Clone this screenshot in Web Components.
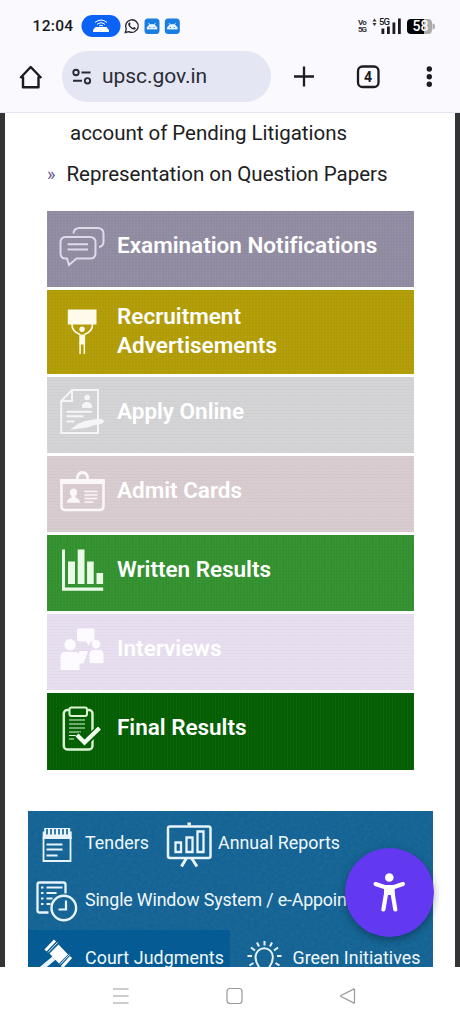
<!DOCTYPE html>
<html lang="en">
<head>
<meta charset="utf-8">
<title>UPSC</title>
<style>
html,body{margin:0;height:100%;overflow:hidden;background:#fff}
body{font-family:Roboto,"Liberation Sans",sans-serif;color:#202124}
</style>
</head>
<body>
<phone-screen>
  <status-bar></status-bar>
  <browser-bar></browser-bar>
  <site-page>
    <notice-item w="277" indent="65" top="8">account of Pending Litigations</notice-item>
    <notice-item w="321" indent="42" top="17" marked>Representation on Question Papers</notice-item>
    <menu-list>
      <menu-tile icon="chat" y="211" h="76" color="#928ca3" ink="#dedaea" w="260">Examination Notifications</menu-tile>
      <menu-tile icon="recruit" y="290" h="84" color="#b39d07" ink="#fffbea" w="124" line2="Advertisements" w2="160">Recruitment</menu-tile>
      <menu-tile icon="apply" y="377" h="76" color="#d4d4d7" ink="#f5f5f7" w="127">Apply Online</menu-tile>
      <menu-tile icon="card" y="456" h="76" color="#d9ccd0" ink="#fbf6f8" w="125">Admit Cards</menu-tile>
      <menu-tile icon="chart" y="535" h="76" color="#33922f" ink="#e9fbe6" w="154">Written Results</menu-tile>
      <menu-tile icon="talk" y="614" h="76" color="#e7dff0" ink="#fdfbff" w="104.5">Interviews</menu-tile>
      <menu-tile icon="final" y="693" h="77" color="#045f03" ink="#d9f5d3" w="129.5">Final Results</menu-tile>
    </menu-list>
    <quick-links></quick-links>
  </site-page>
  <nav-bar></nav-bar>
</phone-screen>
<script>
const define=(name,html,setup)=>customElements.define(name,class extends HTMLElement{
  constructor(){super();this.attachShadow({mode:'open'})}
  connectedCallback(){
    this.shadowRoot.innerHTML=typeof html==='function'?html(this):html;
    if(setup)setup(this);
  }
});

/* A single line of text spaced to an exact measure (attribute w, in px). */
define('fit-text','<style>:host{display:inline-block;white-space:nowrap;flex:none}span{display:inline-block}</style><span><slot></slot></span>',el=>{
  const w=+el.getAttribute('w'),s=el.shadowRoot.querySelector('span');
  el.style.width=w+'px';
  const n=el.textContent.length;
  s.style.letterSpacing=((w-s.getBoundingClientRect().width)/n)+'px';
});

define('phone-screen',`<style>:host{display:flex;flex-direction:column;width:460px;height:1024px;overflow:hidden;background:#fff}</style><slot></slot>`);

define('status-bar',`<style>
:host{display:flex;height:51px;flex:none;background:#f9f9fe;color:#17181c;align-items:flex-start}
svg{display:block;flex:none}
.t{font:500 15.500px/20px Roboto,sans-serif;margin:16px 0 0 32.5px}
.vo{font:700 8px/7px "Roboto",sans-serif;margin:19px 0 0 178px;width:10px;color:#333}
.vo fit-text,.vo{display:block}
.g{font:500 9.5px/10px Roboto,sans-serif;margin:17px 0 0 2px;width:11px}
.sig{margin-left:-10px}
.b{box-sizing:border-box;padding-left:5.500px;margin:19px 0 0 4px;height:15px;border-radius:4px;background:linear-gradient(90deg,#050505 17px,#acacac 17px);color:#fff;font:500 14px/15.5px Roboto,sans-serif;flex:none}
</style>
<fit-text class="t" w="41">12:04</fit-text>
<svg width="106.500" height="51" viewBox="73.500 0 106.500 51">
<rect x="81" y="15" width="39" height="22" rx="11" fill="#0b63f6"/>
<g fill="none" stroke="#fff" stroke-width="1"><path d="M94.500 22.500Q100.500 17.500 106.500 22.500M96.500 24.500Q100.500 21 104.500 24.500M98.500 26Q100.500 24.500 102.500 26"/></g>
<path d="M95 27h11l2.500 3v2h-16v-2z" fill="#fff"/>
<path d="M124.800 32.500l1-3.600a6.300 6.300 0 1 1 2.600 2.700z" fill="none" stroke="#24262a" stroke-width="1.300"/>
<path d="M128.200 23c.8-1 1.500-.4 1.900.9l-.7 1.200c.8 1.500 1.700 2.200 3 2.800l1.100-1 1.800 1c.1 1.500-1.400 1.900-2.700 1.600-2.600-.8-4.500-3-4.900-4.900-.1-.6.100-1.200.5-1.600z" fill="#24262a"/>
<g id="a"><rect x="144" y="18.500" width="15" height="15.500" rx="3.500" fill="#1a7de0"/><path d="M146.500 29a5 4.500 0 0 1 10 0z M148.200 23l1.400 2.500M154.800 23l-1.400 2.500" fill="#e8f4ff" stroke="#e8f4ff" stroke-width=".8"/><path d="M149 27.500h1M153 27.500h1" stroke="#1a7de0"/></g>
<use href="#a" x="20.300"/>
</svg>
<div class="vo"><fit-text w="8">Vo</fit-text><fit-text w="8">5G</fit-text></div>
<svg width="9" height="51" viewBox="368 0 9 51"><path d="M372.500 21.500l2-3 2 3zM372.500 23l2 3 2-3z" fill="#333"/></svg>
<fit-text class="g" w="10">5G</fit-text>
<svg class="sig" width="24" height="51" viewBox="379 0 24 51"><path d="M381.500 28.500h2.800v5.500h-2.800zM387 26.500h2.800v7.500h-2.800zM392.500 22.500h2.800v11.500h-2.800zM398 18.500h2.800v15.500h-2.800z" fill="#1b1c20"/></svg>
<fit-text class="b" w="16">58</fit-text>
<svg width="5" height="51" viewBox="432 0 5 51"><path d="M432.500 23.500q2.500 0 2.500 3t-2.500 3z" fill="#acacac"/></svg>
`,el=>{
  el.shadowRoot.querySelector('.b').style.width='25px';
});

define('browser-bar',`<style>
:host{display:flex;height:61px;flex:none;background:#f9f9fe;border-bottom:1px solid #e6e6f0;color:#26272e}
svg{display:block;flex:none}
.u{display:flex;width:209px;height:51px;border-radius:26px;background:#e5e6f3}
.u fit-text{font-size:21px;line-height:51px;color:#2b2c36}
</style>
<svg width="62" height="61" viewBox="0 51 62 61"><path d="M23 76.500v10.800h15.500v-10.800M20.300 78L30.700 67 41.300 78" fill="none" stroke="#1b1c22" stroke-width="2.400" stroke-linejoin="round"/></svg>
<div class="u"><svg width="40" height="51" viewBox="62 51 40 51"><g fill="none" stroke="#2a2b36" stroke-width="1.900"><circle cx="76" cy="72.500" r="2.700"/><path d="M81.500 72.500h9M73 80.800h9"/><circle cx="87.500" cy="80.800" r="2.700"/></g></svg><fit-text w="105">upsc.gov.in</fit-text></div>
<svg width="189" height="61" viewBox="271 51 189 61"><g fill="none" stroke="#1b1c22" stroke-width="2.300"><path d="M294 76.500h20M304 66.500v20"/><rect x="358" y="66.500" width="20.500" height="20.500" rx="4.500"/></g><text x="368" y="81.700" text-anchor="middle" font-family="Roboto,sans-serif" font-weight="700" font-size="14" fill="#1b1c22">4</text><g fill="#1b1c22"><circle cx="429.300" cy="69" r="2.700"/><circle cx="429.300" cy="76.700" r="2.700"/><circle cx="429.300" cy="84.300" r="2.700"/></g></svg>
`);

define('site-page',`<style>:host{display:flex;flex-direction:column;height:854px;flex:none;box-sizing:border-box;border:solid #333435;border-width:0 5px;background:#fff;overflow:hidden}</style><slot></slot>`);

define('notice-item',el=>`<style>
:host{display:flex;flex:none;height:24px;line-height:24px;font-size:20.500px;color:#202022;margin-top:${el.getAttribute('top')}px;padding-left:${el.getAttribute('indent')}px}
i{font-style:normal;color:#64558f;font-size:18px;width:19.500px;line-height:24px}</style>
${el.hasAttribute('marked')?'<i>»</i>':''}<fit-text w="${el.getAttribute('w')}">${el.textContent}</fit-text>`);

define('menu-list',`<style>:host{display:flex;flex-direction:column;gap:3px;margin:25px 0 0 41.500px;width:367px;flex:none}</style><slot></slot>`);

const icons={
chat:'<path d="M65 237h24.500q5.500 0 5.500 5.500v10.500q0 5.500-5.500 5.500h-13.500l-7.500 6.500-2-6.500h-1.500q-5 0-5-5.500v-10.500q0-5.500 5-5.500zM73 233.500q.5-5.500 6-5.500h18q6 0 6 6v7.500q0 5-4.500 5.500M67 244.300h20.500M67 249.500h20.500"/>',
recruit:'<g fill="currentColor" stroke="none"><path d="M67.300 309.500h28.700v15h-28.700zM78.800 334.500h5.800v10h-5.800z"/><circle cx="81.600" cy="329.300" r="2.700"/></g><path d="M71.500 324q-.5 7 8 10.500M92 324q.5 7-8 10.500" stroke-width="1.600"/><path d="M79.600 343v11M83.800 343v11" stroke-width="1.500"/>',
apply:'<path d="M71.500 390H97.500V433H60.700V401zV401H60.700"/><g fill="currentColor" stroke="none"><circle cx="86.600" cy="397.500" r="2.800"/><path d="M81.500 408v-3.500l3-2.500h4l3 2.500v3.500zM69.500 429.500l8.500-6q11-5 23-4.500l3 2-2 2.500q-10 2-17 4.500z"/></g><path d="M66 411.700h25.500M66 416.300h17M66 421.500h8"/>',
card:'<path d="M61 480V506q0 4 4 4h34q4 0 4-4V480" stroke-width="2.600"/><path d="M59.500 481.600h44.800" stroke-width="5"/><path d="M76.700 480q0-7.500 5.300-7.500t5.300 7.500" stroke-width="2.800"/><g fill="currentColor" stroke="none"><ellipse cx="73" cy="492.500" rx="3.600" ry="4"/><path d="M66.500 502.700q0-4 4.500-5v-2h4v2q4.500 1 4.500 5z"/></g><path d="M84 491.500h13M84 495h13M84 498.500h13M84 502h9" stroke-width="1.700"/>',
chart:'<g fill="currentColor" stroke="none"><path d="M61.500 549.500h3v38h38.200v3.300h-41.200zM67.500 561.500h7v22.500h-7zM77.200 549.500h6.800v34.500h-6.800zM86.600 561.500h6.600v22.500h-6.600zM96 573h6.600v11h-6.600z"/></g>',
talk:'<g fill="currentColor" stroke="none"><path d="M79 628.500h12.500q2.500 0 2.500 2.500v8q0 2.500-2.500 2.500h-1l-2.500 4-2.500-4h-6.500q-2.500 0-2.500-2.500v-8q0-2.500 2.500-2.500z"/><circle cx="69.600" cy="644.700" r="5.700"/><circle cx="95.600" cy="644.300" r="4.200"/><path d="M60 670v-13q0-5 4.500-5h9.500q5 0 5 5v13zM89 663v-8q0-5 4-5h6q4 0 4 5v8zM78.500 651h9l-4.500 12.500h-4z"/></g>',
final:'<rect x="63.300" y="710" width="28.700" height="39.500" rx="3.500" stroke-width="2.400"/><rect x="69" y="707.500" width="17.500" height="8.500" rx="2" fill="#045f03"/><path d="M68.500 720h16M68.500 724h16M68.500 728h16M68.500 732h12M68.500 735.500h7M68.500 739h5" stroke-width="1.200"/><path d="M76.500 734.500l7.700 8.200 15.500-15" stroke="#045f03" stroke-width="7.500"/><path d="M76.500 735l7.500 7.500 15-14.500" stroke-width="4.200" stroke="#f2fff0"/>'
};
define('menu-tile',el=>{
  const a=n=>el.getAttribute(n),h=a('h');
  return `<style>
:host{display:flex;flex:none;height:${h}px;color:#fff;background:repeating-linear-gradient(90deg,#ffffff08 0 1px,#0000 1px 3px),repeating-linear-gradient(#00000006 0 1px,#0000 1px 3px),${a('color')}}
svg{display:block;flex:none;color:${a('ink')}}
.x{display:flex;flex-direction:column;padding-top:${a('line2')?12:20}px;font-size:22.500px;font-weight:600;line-height:29px}
</style><svg width="70.500" height="${h}" viewBox="46.500 ${a('y')} 70.500 ${h}" fill="none" stroke="currentColor" stroke-width="2">${icons[a('icon')]}</svg>
<div class="x"><fit-text w="${a('w')}">${el.textContent}</fit-text>${a('line2')?`<fit-text w="${a('w2')}">${a('line2')}</fit-text>`:''}</div>`;
});

const links={
tender:'<path d="M43 836v24h27v-24" stroke-width="1.800"/><path d="M42.200 830.500h1.500v-3.500h26v3.500h1.500v7.500h-29z" fill="#e8f4fb" stroke="none"/><path d="M46.500 828v5.500M50.500 828v5.500M54.500 828v5.500M58.500 828v5.500M62.500 828v5.500M66.500 828v5.500" stroke="#196594" stroke-width="1.700"/><path d="M46 843.500h16M46 848.500h16M46 854.500h11" stroke-width="1.800"/>',
board:'<rect x="168" y="825.500" width="42.500" height="31.500" rx="2" stroke-width="2.500"/><path d="M189.200 821.500v3" stroke-width="3.500"/><path d="M186.500 857l-5 8.500M191.500 857l5.500 8.500" stroke-width="3"/><path d="M175.500 841.500h5.500v9.500h-5.500zM186.500 836.500h6v14.500h-6zM197.500 830.500h6v20.500h-6z" stroke-width="2.300"/>',
window:'<path d="M48 912h-9q-2 0-2-2v-26q0-2 2-2h24q2 0 2 2v9" stroke-width="2.300"/><path d="M46 887h16M46 892.500h10M46 898h6M46 903.500h4" stroke-width="1.800"/><path d="M40.500 887h2.500M40.500 892.500h2.500M40.500 898h2.500M40.500 903.500h2.500" stroke-width="2"/><circle cx="63.300" cy="907.500" r="12.300" stroke-width="2.400"/><path d="M65.500 900v9h-7.500" stroke-width="2.200"/>',
gavel:'<path d="M56 955L38 970" stroke-width="4.500"/><path d="M58 943.500l9.500 10-9 9-9.500-10z" fill="#fff" stroke="none"/><path d="M54.500 939.500l-9.500 10M70.500 956l-9 10" stroke-width="3" stroke="#fff"/><path d="M57 941.500l-9.500 10M69 953.500l-9.500 10" stroke-width="1"/>',
bulb:'<path d="M258.500 970v-4q-3.500-5-3.500-10a8.700 8.700 0 0 1 17.400 0q0 5-3.500 10v4M264 940v4.500M256.500 941.500l2 4M271.500 941.500l-2 4M250.500 946.500l4 3M277.500 946.500l-4 3M247 955h4.500M281 955h-4.500M249 964.500l4-2.500M279 964.500l-4-2.500"/>'
};
define('link-item',el=>{
  const a=n=>el.getAttribute(n);
  return `<style>:host{display:flex;flex:none;height:57.500px;color:#f1f8fc;font-size:17.800px;line-height:${a('lh')||56.5}px}svg{display:block;flex:none}:host([active]){background:#055c95;padding-right:5.500px}</style>
<svg width="${a('iw')}" height="57.500" viewBox="${a('x')} ${a('y')} ${a('iw')} 57.500" fill="none" stroke="#e8f4fb" stroke-width="2">${links[a('icon')]}</svg><fit-text w="${a('w')}">${el.textContent}</fit-text>`;
});

define('quick-links',`<style>
:host{display:grid;grid-template-columns:1fr;margin:41px 0 0 22.500px;width:405px;height:156px;flex:none;position:relative;background:#0f6194}
.n{position:absolute;inset:0;opacity:.09}
.r{display:flex;height:57.500px;position:relative}
.w{padding-top:3.500px;height:152.500px;overflow:hidden;position:relative;width:405px}
a11y-button{position:absolute;left:317.500px;top:37px}
</style>
<svg class="n" width="405" height="156"><filter id="n"><feTurbulence type="fractalNoise" baseFrequency=".3" numOctaves="2"/><feColorMatrix type="saturate" values="0"/></filter><rect width="405" height="156" filter="url(#n)"/></svg>
<div class="w">
<div class="r"><link-item icon="tender" x="27.500" y="814" iw="57.500" w="64">Tenders</link-item><link-item icon="board" x="149" y="814" iw="69" w="122">Annual Reports</link-item></div>
<div class="r"><link-item icon="window" x="27.500" y="871.500" iw="57.500" w="307.500">Single Window System / e-Appointment</link-item></div>
<div class="r"><link-item active icon="gavel" x="27.500" y="929" iw="57.500" w="139" lh="55">Court Judgments</link-item><link-item icon="bulb" x="229.500" y="929" iw="63" w="128" lh="55">Green Initiatives</link-item></div>
</div><a11y-button></a11y-button>`);

define('a11y-button',`<style>:host{display:block;width:89px;height:89px;border-radius:50%;background:#6338f1;box-shadow:0 3px 9px #0005}svg{display:block}</style>
<svg width="89" height="89" viewBox="345.500 848 89 89" fill="#fff" stroke="#fff" stroke-linecap="round"><circle cx="389.800" cy="877.500" r="4.300" stroke="none"/><path d="M376 884l9 3h9.500l9-3" fill="none" stroke-width="4" stroke-linejoin="round"/><path d="M384.500 886h10.500l.5 9h-11z" stroke="none"/><path d="M386.500 894l-2.600 15.500M393.200 894l2.600 15.500" stroke-width="4.200"/></svg>`);

define('nav-bar',`<style>:host{display:block;height:57px;flex:none;background:#fff}svg{display:block}</style>
<svg width="460" height="57" viewBox="0 967 460 57" fill="none" stroke="#999" stroke-width="1.200"><path d="M113 989h15.500M113 996h15.500M113 1003h15.500"/><rect x="227" y="988.500" width="15" height="15" rx="3"/><path d="M354.500 989.500v13q0 .8-.8.400l-12.700-6.400q-.8-.5 0-1l12.700-6.400q.8-.4.8.4z"/></svg>`);
</script>
</body>
</html>
